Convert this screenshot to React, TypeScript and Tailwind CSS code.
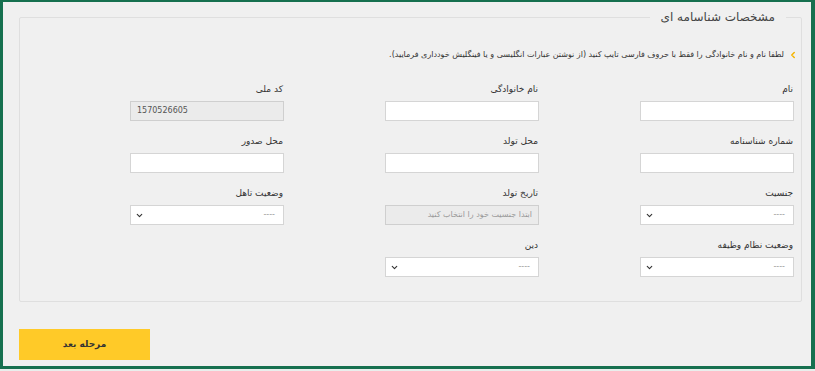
import { ChevronDown, ChevronLeft } from 'lucide-react';

type Field = {
  label: string;
  kind: 'input' | 'select' | 'disabled';
  value?: string;
  ltr?: boolean;
};

// grid order is RTL: right column first
const fields: (Field | null)[] = [
  { label: 'نام', kind: 'input' },
  { label: 'نام خانوادگی', kind: 'input' },
  { label: 'کد ملی', kind: 'disabled', value: '1570526605', ltr: true },
  { label: 'شماره شناسنامه', kind: 'input' },
  { label: 'محل تولد', kind: 'input' },
  { label: 'محل صدور', kind: 'input' },
  { label: 'جنسیت', kind: 'select' },
  { label: 'تاریخ تولد', kind: 'disabled', value: 'ابتدا جنسیت خود را انتخاب کنید' },
  { label: 'وضعیت تاهل', kind: 'select' },
  { label: 'وضعیت نظام وظیفه', kind: 'select' },
  { label: 'دین', kind: 'select' },
  null,
];

function FormField({ field }: { field: Field }) {
  return (
    <div className="flex flex-col">
      <label className="text-[9px] leading-[16px] h-[16px] mb-[4px] text-[#333] pr-[1px]">{field.label}</label>
      {field.kind === 'input' && (
        <input type="text" className="h-[20px] w-full bg-white border border-[#d5d5d5] outline-none px-2 text-[10px]" />
      )}
      {field.kind === 'disabled' && (
        <div
          dir={field.ltr ? 'ltr' : 'rtl'}
          className={`h-[20px] w-full bg-[#ebebeb] border border-[#cfcfcf] flex items-center px-[6px] text-[8px] ${field.ltr ? 'text-[#555]' : 'text-[#9a9a9a]'}`}
        >
          {field.value}
        </div>
      )}
      {field.kind === 'select' && (
        <div className="h-[20px] w-full bg-white border border-[#d5d5d5] flex items-center justify-between px-[4px] pr-[8px]">
          <span className="text-[8px] text-[#999]">----</span>
          <ChevronDown className="w-[9px] h-[9px] text-[#333]" strokeWidth={3} />
        </div>
      )}
    </div>
  );
}

export default function App() {
  return (
    <div className="w-[815px] h-[371px] bg-[#e9eeec]" style={{ fontFamily: '"DejaVu Sans", sans-serif' }}>
      <div dir="rtl" className="h-[369px] bg-[#f0f0f0] border-t-[2px] border-l-[3px] border-r-[4px] border-b-[3px] border-[#16704f] pt-[5px] pr-[9px] pl-[16px]">
        <fieldset className="border border-[#dfdfdf] rounded-[2px] pr-[7px] pb-[24px]">
          <legend className="mr-[8px] px-[11px] text-[12px] leading-[20px] text-[#444]">مشخصات شناسامه ای</legend>

          <div className="flex items-center gap-[4px] mt-[20px] h-[16px] mr-[-4px]">
            <ChevronLeft className="w-[10px] h-[10px] text-[#f5b400]" strokeWidth={3.5} />
            <p className="text-[8px] text-[#333]">
              لطفا نام و نام خانوادگی را فقط با حروف فارسی تایپ کنید (از نوشتن عبارات انگلیسی و یا فینگلیش خودداری فرمایید).
            </p>
          </div>

          <div className="grid grid-cols-[154px_154px_154px] gap-x-[101px] gap-y-[12px] mt-[18px]">
            {fields.map((f, i) => (f ? <FormField key={i} field={f} /> : <div key={i} />))}
          </div>
        </fieldset>

        <div className="mt-[27px] flex justify-end">
          <button className="w-[131px] h-[31px] bg-[#ffca28] text-[9px] font-bold text-[#333]">مرحله بعد</button>
        </div>
      </div>
    </div>
  );
}
